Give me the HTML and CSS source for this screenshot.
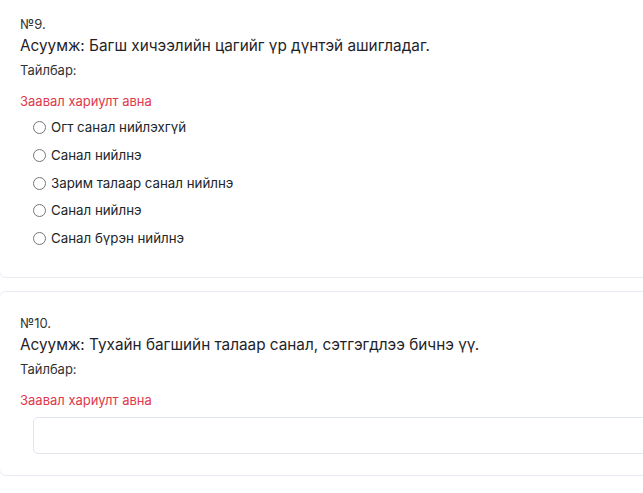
FILE: index.html
```html
<!DOCTYPE html>
<html lang="mn">
<head>
<meta charset="utf-8">
<link rel="stylesheet" href="styles.css">
</head>
<body>
<div class="list">
  <section class="card card-first">
    <div class="num">№9.</div>
    <div class="question">Асуумж: Багш хичээлийн цагийг үр дүнтэй ашигладаг.</div>
    <div class="desc">Тайлбар:</div>
    <div class="required">Заавал хариулт авна</div>
    <div class="options">
      <label class="option"><input type="radio" name="q9"><span>Огт санал нийлэхгүй</span></label>
      <label class="option"><input type="radio" name="q9"><span>Санал нийлнэ</span></label>
      <label class="option"><input type="radio" name="q9"><span>Зарим талаар санал нийлнэ</span></label>
      <label class="option"><input type="radio" name="q9"><span>Санал нийлнэ</span></label>
      <label class="option"><input type="radio" name="q9"><span>Санал бүрэн нийлнэ</span></label>
    </div>
  </section>
  <section class="card">
    <div class="num">№10.</div>
    <div class="question">Асуумж: Тухайн багшийн талаар санал, сэтгэгдлээ бичнэ үү.</div>
    <div class="desc">Тайлбар:</div>
    <div class="required">Заавал хариулт авна</div>
    <div class="answer"><textarea class="textarea"></textarea></div>
  </section>
</div>
</body>
</html>
```
FILE: styles.css
```css
html, body {
  margin: 0;
  padding: 0;
  background: #ffffff;
  overflow: hidden;
}
body {
  font-family: Inter, "Liberation Sans", Arial, sans-serif;
  color: #212529;
}
.list {
  width: 700px;
  margin-left: -1px;
  margin-top: -8px;
  display: flex;
  flex-direction: column;
  gap: 13px;
}
.card {
  border: 1px solid #e6ebf1;
  border-radius: 7px;
  padding: 22px 20px 21px 20px;
  background: #fff;
}
.num {
  font-size: 13px;
  line-height: 18px;
  color: #333;
}
.question {
  font-size: 15.3px;
  line-height: 22px;
  color: #1f2328;
  margin-top: 2px;
}
.desc {
  font-size: 13px;
  line-height: 18px;
  color: #333;
  margin-top: 4px;
}
.required {
  font-size: 13px;
  line-height: 18px;
  color: #e0394b;
  margin-top: 13px;
}
.options {
  display: flex;
  flex-direction: column;
  gap: 8.75px;
  margin-top: 8px;
  margin-bottom: 8px;
  padding-left: 9px;
}
.option {
  display: flex;
  align-items: center;
  font-size: 13.3px;
  line-height: 19px;
  color: #212529;
}
.option input {
  margin: 0 5px 0 4px;
  width: 13px;
  height: 13px;
}
.answer {
  padding-left: 13px;
  margin-top: 8px;
}
.textarea {
  display: block;
  width: 100%;
  box-sizing: border-box;
  height: 37px;
  border: 1px solid #e1e6ec;
  border-radius: 5px;
  resize: none;
  font-family: inherit;
}
```
